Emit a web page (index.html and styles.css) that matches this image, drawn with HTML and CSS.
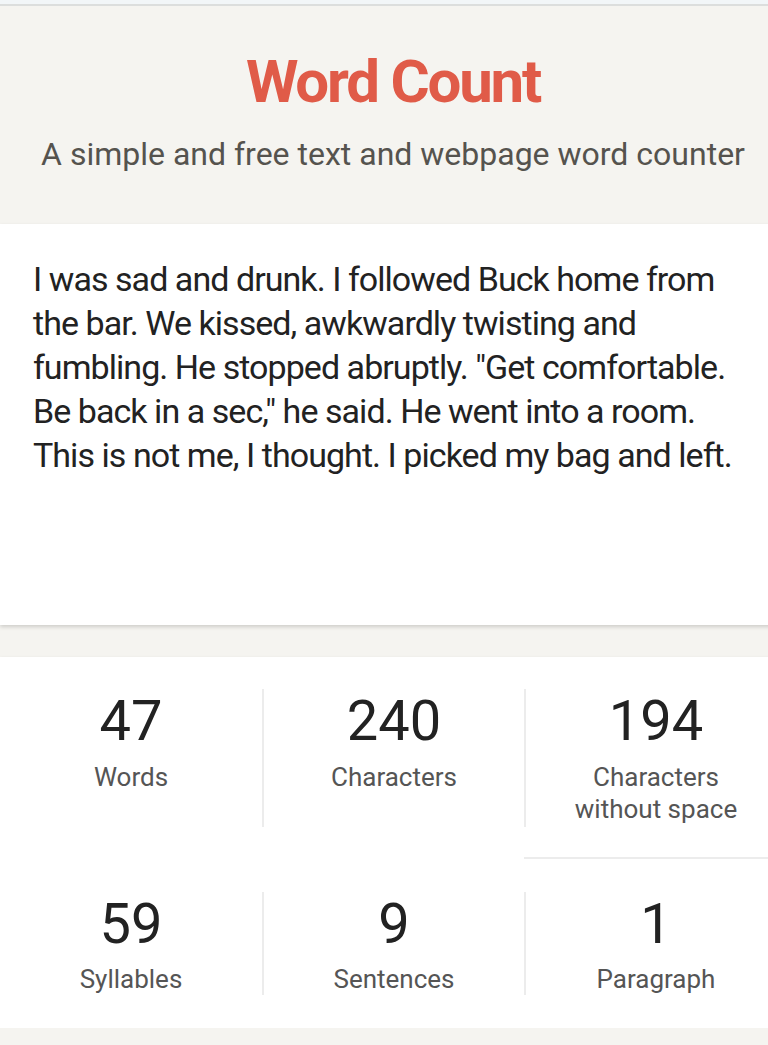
FILE: index.html
```html
<!DOCTYPE html>
<html lang="en">
<head>
<meta charset="utf-8">
<title>Word Count</title>
<link rel="stylesheet" href="styles.css">
</head>
<body>
<div class="topbar"></div>
<div class="page">
  <header class="hero">
    <h1 class="title">Word Count</h1>
    <p class="subtitle">A simple and free text and webpage word counter</p>
  </header>
  <section class="editor">
    <p class="editor-text">I was sad and drunk. I followed Buck home from the bar. We kissed, awkwardly twisting and fumbling. He stopped abruptly. "Get comfortable. Be back in a sec," he said. He went into a room. This is not me, I thought. I picked my bag and left.</p>
  </section>
  <section class="stats">
    <div class="stat-row">
      <div class="stat"><div class="stat-body"><div class="num">47</div><div class="label">Words</div></div></div>
      <div class="stat"><div class="stat-body divided"><div class="num">240</div><div class="label">Characters</div></div></div>
      <div class="stat underlined"><div class="stat-body divided"><div class="num">194</div><div class="label">Characters<br>without space</div></div></div>
    </div>
    <div class="stat-row second">
      <div class="stat"><div class="stat-body short"><div class="num">59</div><div class="label">Syllables</div></div></div>
      <div class="stat"><div class="stat-body short divided"><div class="num">9</div><div class="label">Sentences</div></div></div>
      <div class="stat"><div class="stat-body short divided"><div class="num">1</div><div class="label">Paragraph</div></div></div>
    </div>
  </section>
</div>
</body>
</html>
```

FILE: styles.css
```css
html, body {
  margin: 0;
  padding: 0;
}
body {
  background: #f5f4f0;
  font-family: Roboto, "Liberation Sans", Arial, sans-serif;
  overflow: hidden;
  width: 768px;
}
.topbar {
  height: 4px;
  background: #f2f6f8;
  border-bottom: 2px solid #dcdedd;
}
.page {
  width: 786px;
}
.hero {
  background: #f5f4f0;
  text-align: center;
  padding: 40px 0 50px;
}
.title {
  margin: 0;
  font-size: 60px;
  line-height: 72px;
  font-weight: 700;
  color: #e05b48;
  letter-spacing: -2.2px;
}
.subtitle {
  margin: 16px 0 0;
  font-size: 32px;
  line-height: 40px;
  font-weight: 400;
  color: #55534e;
}
.editor {
  background: #fff;
  height: 401px;
  box-sizing: border-box;
  padding: 33px 33px;
  box-shadow: 0 2px 4px rgba(0, 0, 0, 0.16);
  position: relative;
}
.editor-text {
  margin: 0;
  font-size: 34px;
  line-height: 44px;
  color: #222;
  letter-spacing: -0.95px;
}
.stats {
  margin-top: 32px;
  background: #fff;
  padding: 32px 0 33px;
  box-shadow: 0 2px 4px rgba(0, 0, 0, 0.16);
}
.stat-row {
  display: grid;
  grid-template-columns: repeat(3, 1fr);
}
.stat-row.second {
  margin-top: 33px;
}
.stat {
  display: flex;
  flex-direction: column;
}
.stat.underlined {
  border-bottom: 2px solid #ececec;
  padding-bottom: 30px;
}
.stat-body {
  height: 138px;
  text-align: center;
}
.stat-body.short {
  height: 103px;
}
.stat-body.divided {
  border-left: 2px solid #ececec;
}
.num {
  font-size: 56px;
  line-height: 64px;
  color: #222;
}
.label {
  margin-top: 8px;
  font-size: 26px;
  line-height: 32px;
  color: #555;
}
.short .label {
  margin-top: 7px;
}
```
